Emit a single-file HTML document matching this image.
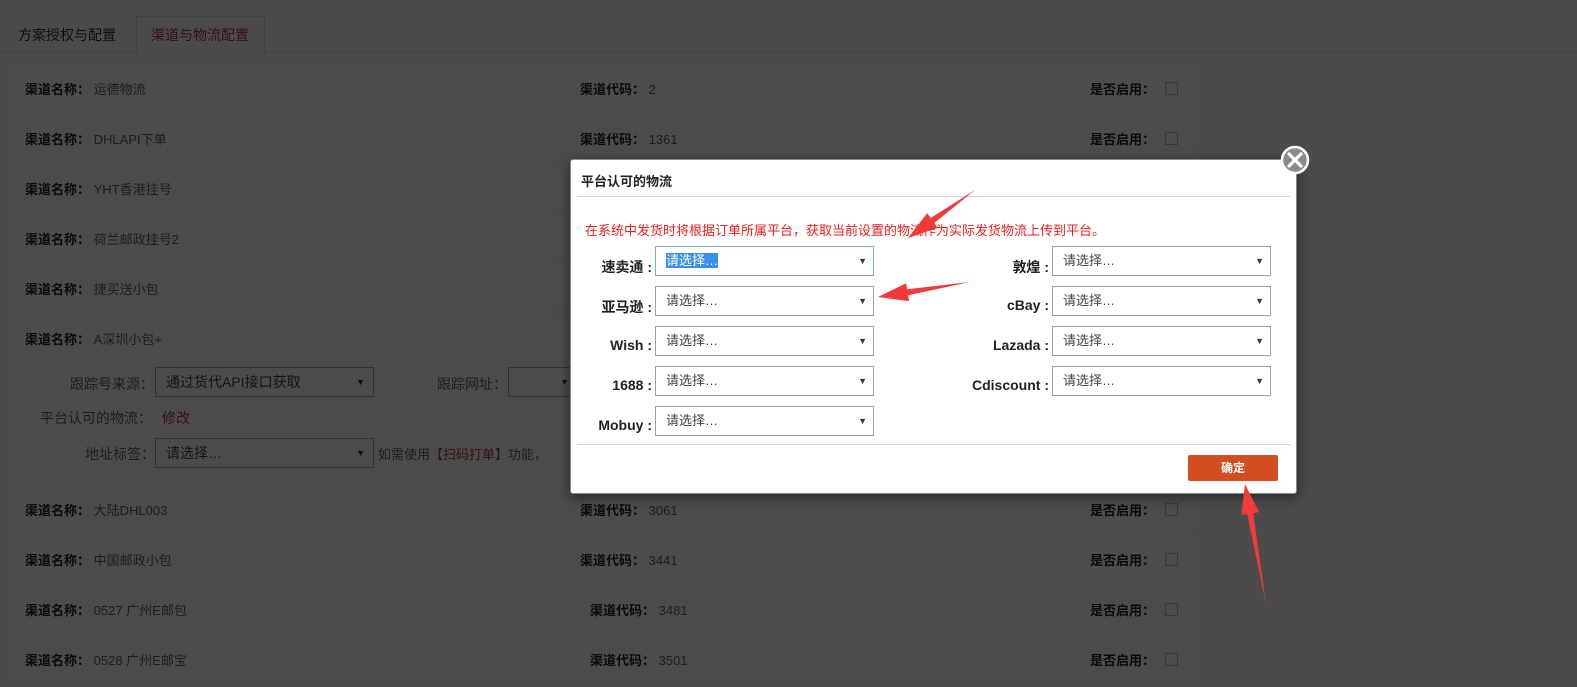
<!DOCTYPE html>
<html style="background:#fafafa"><head><meta charset="utf-8">
<style>
*{margin:0;padding:0;box-sizing:border-box}
body{width:1577px;height:687px;background:#fafafa;font-family:"Liberation Sans","Noto Sans CJK SC",sans-serif;font-size:13px;position:relative;overflow:hidden;color:#555}
.abs{position:absolute;white-space:nowrap}
.tabline{position:absolute;left:0;top:52px;width:1577px;height:1px;background:#ddd}
.tab2{position:absolute;left:136px;top:16px;width:129px;height:37px;border:1px solid #ddd;border-bottom:none;background:#fafafa}
.row{position:absolute;left:8px;width:1188px;height:44px;background:#fff}
.lb{font-weight:bold;color:#222}
.v{color:#666}
.sel{position:absolute;height:30px;border:1px solid #aaa;background:#fff;color:#444;font-size:14px;line-height:28px;padding-left:10px}
.sel:after{content:"▼";position:absolute;right:8px;top:0;font-size:9px;color:#333}
.dl{position:absolute;font-weight:bold;font-size:14px;color:#222;text-align:right;width:120px}
.dsel{position:absolute;width:219px;height:30px;border:1px solid #a0a0a0;background:#fff;color:#444;font-size:13px;line-height:28px;padding-left:10px}
.dsel:after{content:"▼";position:absolute;right:6px;top:0;font-size:9px;color:#333}
.cb{position:absolute;width:13px;height:13px;border:1px solid #bbb;background:#fff}
.ov{position:absolute;left:0;top:0;width:1577px;height:687px;background:rgba(0,0,0,0.7)}
</style></head><body>
<div class="tabline"></div>
<div class="tab2"></div>
<div class="abs" style="left:18px;top:25px;font-size:14px;color:#333">方案授权与配置</div>
<div class="abs" style="left:151px;top:25px;font-size:14px;color:#c0392b">渠道与物流配置</div>

<div class="row" style="top:65px"></div>
<div class="row" style="top:115px"></div>
<div class="row" style="top:165px"></div>
<div class="row" style="top:215px"></div>
<div class="row" style="top:265px"></div>
<div class="row" style="top:315px;height:180px"></div>
<div class="row" style="top:486px"></div>
<div class="row" style="top:536px"></div>
<div class="row" style="top:586px"></div>
<div class="row" style="top:636px"></div>

<div class="abs" style="left:25px;top:79px"><span class="lb">渠道名称：</span> <span class="v">运德物流</span></div>
<div class="abs" style="left:580px;top:79px"><span class="lb">渠道代码：</span> <span class="v">2</span></div>
<div class="abs" style="left:1090px;top:79px"><span class="lb">是否启用：</span></div><div class="cb" style="left:1165px;top:82px"></div>
<div class="abs" style="left:25px;top:129px"><span class="lb">渠道名称：</span> <span class="v">DHLAPI下单</span></div>
<div class="abs" style="left:580px;top:129px"><span class="lb">渠道代码：</span> <span class="v">1361</span></div>
<div class="abs" style="left:1090px;top:129px"><span class="lb">是否启用：</span></div><div class="cb" style="left:1165px;top:132px"></div>
<div class="abs" style="left:25px;top:179px"><span class="lb">渠道名称：</span> <span class="v">YHT香港挂号</span></div>
<div class="abs" style="left:25px;top:229px"><span class="lb">渠道名称：</span> <span class="v">荷兰邮政挂号2</span></div>
<div class="abs" style="left:25px;top:279px"><span class="lb">渠道名称：</span> <span class="v">捷买送小包</span></div>
<div class="abs" style="left:25px;top:329px"><span class="lb">渠道名称：</span> <span class="v">A深圳小包+</span></div>
<div class="abs v" style="left:70px;top:374px;font-size:14px">跟踪号来源：</div>
<div class="sel" style="left:155px;top:367px;width:219px">通过货代API接口获取</div>
<div class="abs v" style="left:437px;top:374px;font-size:14px">跟踪网址：</div>
<div class="sel" style="left:508px;top:367px;width:70px"></div>
<div class="abs v" style="left:40px;top:408px;font-size:14px">平台认可的物流：</div>
<div class="abs" style="left:162px;top:408px;font-size:14px;color:#c0392b">修改</div>
<div class="abs v" style="left:85px;top:444px;font-size:14px">地址标签：</div>
<div class="sel" style="left:155px;top:438px;width:219px">请选择…</div>
<div class="abs v" style="left:378px;top:444px;font-size:13px">如需使用【<span style="color:#c0392b">扫码打单</span>】功能，</div>

<div class="abs" style="left:25px;top:500px"><span class="lb">渠道名称：</span> <span class="v">大陆DHL003</span></div>
<div class="abs" style="left:580px;top:500px"><span class="lb">渠道代码：</span> <span class="v">3061</span></div>
<div class="abs" style="left:1090px;top:500px"><span class="lb">是否启用：</span></div><div class="cb" style="left:1165px;top:503px"></div>
<div class="abs" style="left:25px;top:550px"><span class="lb">渠道名称：</span> <span class="v">中国邮政小包</span></div>
<div class="abs" style="left:580px;top:550px"><span class="lb">渠道代码：</span> <span class="v">3441</span></div>
<div class="abs" style="left:1090px;top:550px"><span class="lb">是否启用：</span></div><div class="cb" style="left:1165px;top:553px"></div>
<div class="abs" style="left:25px;top:600px"><span class="lb">渠道名称：</span> <span class="v">0527 广州E邮包</span></div>
<div class="abs" style="left:590px;top:600px"><span class="lb">渠道代码：</span> <span class="v">3481</span></div>
<div class="abs" style="left:1090px;top:600px"><span class="lb">是否启用：</span></div><div class="cb" style="left:1165px;top:603px"></div>
<div class="abs" style="left:25px;top:650px"><span class="lb">渠道名称：</span> <span class="v">0528 广州E邮宝</span></div>
<div class="abs" style="left:590px;top:650px"><span class="lb">渠道代码：</span> <span class="v">3501</span></div>
<div class="abs" style="left:1090px;top:650px"><span class="lb">是否启用：</span></div><div class="cb" style="left:1165px;top:653px"></div>

<div class="ov"></div>

<!-- dialog -->
<div style="position:absolute;left:570px;top:159px;width:727px;height:335px;background:#fff;border:1px solid #888;border-radius:3px;box-shadow:0 3px 12px rgba(0,0,0,.5)"></div>
<div class="abs" style="left:581px;top:171px;font-weight:bold;font-size:13px;color:#222">平台认可的物流</div>
<div style="position:absolute;left:577px;top:196px;width:713px;height:1px;background:#d5d5d5"></div>
<div class="abs" style="left:585px;top:220px;font-size:13px;color:#f31d1d">在系统中发货时将根据订单所属平台，获取当前设置的物流作为实际发货物流上传到平台。</div>

<div class="dl" style="left:532px;top:257px">速卖通 :</div>
<div class="dsel" style="left:655px;top:246px;border-color:#7ea6e0"><span style="background:#3b8fe8;color:#fff">请选择…</span></div>
<div class="dl" style="left:532px;top:297px">亚马逊 :</div>
<div class="dsel" style="left:655px;top:286px">请选择…</div>
<div class="dl" style="left:532px;top:337px">Wish :</div>
<div class="dsel" style="left:655px;top:326px">请选择…</div>
<div class="dl" style="left:532px;top:377px">1688 :</div>
<div class="dsel" style="left:655px;top:366px">请选择…</div>
<div class="dl" style="left:532px;top:417px">Mobuy :</div>
<div class="dsel" style="left:655px;top:406px">请选择…</div>

<div class="dl" style="left:929px;top:257px">敦煌 :</div>
<div class="dsel" style="left:1052px;top:246px">请选择…</div>
<div class="dl" style="left:929px;top:297px">cBay :</div>
<div class="dsel" style="left:1052px;top:286px">请选择…</div>
<div class="dl" style="left:929px;top:337px">Lazada :</div>
<div class="dsel" style="left:1052px;top:326px">请选择…</div>
<div class="dl" style="left:929px;top:377px">Cdiscount :</div>
<div class="dsel" style="left:1052px;top:366px">请选择…</div>

<div style="position:absolute;left:577px;top:444px;width:714px;height:1px;background:#d5d5d5"></div>
<div style="position:absolute;left:1188px;top:455px;width:90px;height:26px;background:#d24e22;border-radius:2px;color:#fff;font-size:12px;text-align:center;line-height:26px;font-weight:bold">确定</div>

<svg style="position:absolute;left:0;top:0" width="1577" height="687">
 <circle cx="1295" cy="160" r="13" fill="#8a8a8a" stroke="#fff" stroke-width="2.5"/>
 <path d="M1289 154 L1301 166 M1301 154 L1289 166" stroke="#fff" stroke-width="3.2" stroke-linecap="round"/>
 <polygon points="975,190 934.3,223 937.8,227.9 908,238 927.2,213.1 930.7,218" fill="#f23a3a"/>
 <polygon points="970,282 908.1,295.2 909.1,301.1 878,297 906.1,283.3 907.1,289.2" fill="#f23a3a"/>
 <polygon points="1266,604 1253.2,513.1 1259.1,512.1 1245,484 1241.3,515.1 1247.2,514.1" fill="#f23a3a"/>
</svg>
</body></html>
